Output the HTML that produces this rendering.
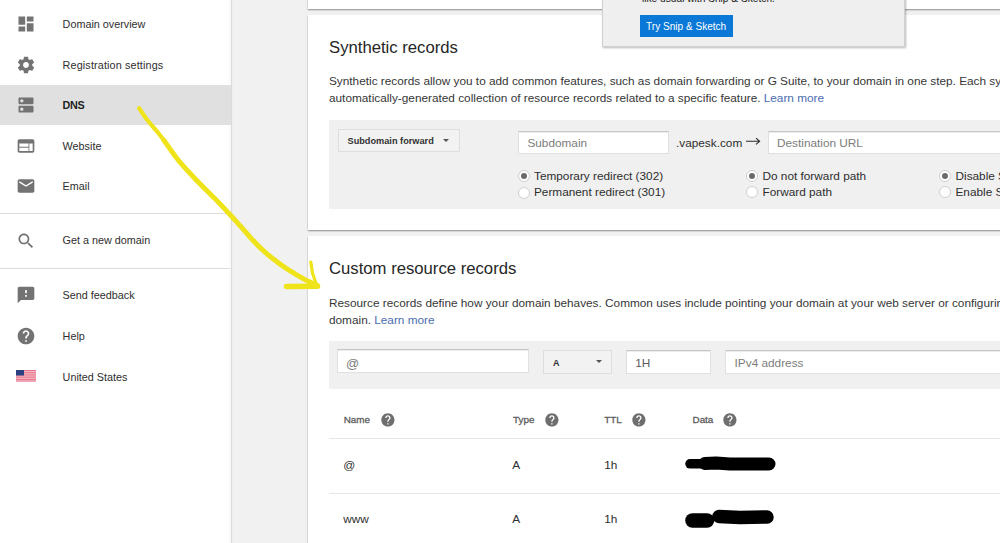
<!DOCTYPE html>
<html><head><meta charset="utf-8">
<style>
*{margin:0;padding:0;box-sizing:border-box}
html,body{width:1000px;height:543px;overflow:hidden;background:#f1f1f1;font-family:"Liberation Sans",sans-serif;color:#212121}
.a{position:absolute;white-space:nowrap;line-height:1}
#side{position:absolute;left:0;top:0;width:231px;height:543px;background:#fff;box-shadow:1px 0 1px rgba(0,0,0,.09),inset -3px 0 3px -2px rgba(0,0,0,.04)}
.hl{position:absolute;left:0;top:85px;width:231px;height:40px;background:#e0e0e0}
.nav{font-size:10.8px;color:#2e2e2e;left:62.6px}
.ico{position:absolute;left:15.5px;width:20px;height:20px;fill:#737373}
.dv{position:absolute;left:0;width:231px;height:1px;background:#dcdcdc}
.card{position:absolute;left:308px;width:700px;background:#fff;box-shadow:0 1px 1.5px rgba(0,0,0,.42)}
.h2{font-size:16.7px;color:#262626}
.p{font-size:11.8px;color:#363636}
.link{color:#4a6db0}
.gbox{position:absolute;background:#f0f0f0}
.inp{position:absolute;background:#fff;border:1px solid #e0e0e0;border-top:1px solid #c6c6c6;box-shadow:inset 0 1px 0 #ececec}
.ph{font-size:11.8px;color:#7c7c7c}
.rad{position:absolute;width:12px;height:12px;border-radius:50%;border:1px solid #cfcfcf;background:#fff}
.rad.on::after{content:"";position:absolute;left:2px;top:2px;width:6px;height:6px;border-radius:50%;background:#6a6a6a}
.rl{font-size:11.8px;color:#2e2e2e}
.th{font-size:9.9px;color:#5c5c5c;-webkit-text-stroke:0.3px #5c5c5c}
.q{position:absolute;width:13px;height:13px;border-radius:50%;background:#6f6f6f;color:#fff;font-size:10px;font-weight:bold;text-align:center;line-height:13px}
.td{font-size:11.8px;color:#2e2e2e}
.dd{position:absolute;background:#f2f2f2;border:1px solid #dedede}
.tri{position:absolute;width:0;height:0;border-left:3px solid transparent;border-right:3px solid transparent;border-top:3.5px solid #555}
</style></head><body>
<div id="side">
  <div class="hl"></div>
  <svg class="ico" style="top:14.4px" viewBox="0 0 24 24"><path d="M3 13h8V3H3v10zm0 8h8v-6H3v6zm10 0h8V11h-8v10zm0-18v6h8V3h-8z"/></svg>
  <svg class="ico" style="top:54.6px" viewBox="0 0 24 24"><path d="M19.43 12.98c.04-.32.07-.64.07-.98s-.03-.66-.07-.98l2.11-1.65c.19-.15.24-.42.12-.64l-2-3.46c-.12-.22-.39-.3-.61-.22l-2.49 1c-.52-.4-1.08-.73-1.69-.98l-.38-2.65C14.46 2.18 14.25 2 14 2h-4c-.25 0-.46.18-.49.42l-.38 2.65c-.61.25-1.17.59-1.69.98l-2.49-1c-.23-.09-.49 0-.61.22l-2 3.46c-.13.22-.07.49.12.64l2.11 1.65c-.04.32-.07.65-.07.98s.03.66.07.98l-2.11 1.65c-.19.15-.24.42-.12.64l2 3.46c.12.22.39.3.61.22l2.49-1c.52.4 1.08.73 1.69.98l.38 2.65c.03.24.24.42.49.42h4c.25 0 .46-.18.49-.42l.38-2.65c.61-.25 1.17-.59 1.69-.98l2.49 1c.23.09.49 0 .61-.22l2-3.46c.12-.22.07-.49-.12-.64l-2.11-1.65zM12 15.5c-1.93 0-3.5-1.57-3.5-3.5s1.57-3.5 3.5-3.5 3.5 1.57 3.5 3.5-1.57 3.5-3.5 3.5z"/></svg>
  <svg class="ico" style="top:95.2px" viewBox="0 0 24 24"><path d="M20 13H4c-.55 0-1 .45-1 1v6c0 .55.45 1 1 1h16c.55 0 1-.45 1-1v-6c0-.55-.45-1-1-1zM7 19c-1.1 0-2-.9-2-2s.9-2 2-2 2 .9 2 2-.9 2-2 2zM20 3H4c-.55 0-1 .45-1 1v6c0 .55.45 1 1 1h16c.55 0 1-.45 1-1V4c0-.55-.45-1-1-1zM7 9c-1.1 0-2-.9-2-2s.9-2 2-2 2 .9 2 2-.9 2-2 2z"/></svg>
  <svg class="ico" style="top:135.9px" viewBox="0 0 24 24"><path d="M20 4H4c-1.1 0-1.99.9-1.99 2L2 18c0 1.1.9 2 2 2h16c1.1 0 2-.9 2-2V6c0-1.1-.9-2-2-2zm-5 14H4v-4h11v4zm0-5H4V9h11v4zm5 5h-4V9h4v9z"/></svg>
  <svg class="ico" style="top:176px" viewBox="0 0 24 24"><path d="M20 4H4c-1.1 0-1.99.9-1.99 2L2 18c0 1.1.9 2 2 2h16c1.1 0 2-.9 2-2V6c0-1.1-.9-2-2-2zm0 4l-8 5-8-5V6l8 5 8-5v2z"/></svg>
  <svg class="ico" style="top:231px" viewBox="0 0 24 24"><path d="M15.5 14h-.79l-.28-.27C15.41 12.59 16 11.11 16 9.5 16 5.91 13.09 3 9.5 3S3 5.91 3 9.5 5.91 16 9.5 16c1.61 0 3.09-.59 4.23-1.570l.27.28v.79l5 4.99L20.49 19l-4.99-5zm-6 0C7.01 14 5 11.99 5 9.5S7.01 5 9.5 5 14 7.01 14 9.5 11.99 14 9.5 14z"/></svg>
  <svg class="ico" style="top:285.2px" viewBox="0 0 24 24"><path d="M20 2H4c-1.1 0-1.99.9-1.99 2L2 22l4-4h14c1.1 0 2-.9 2-2V4c0-1.1-.9-2-2-2zm-7 12h-2v-2h2v2zm0-4h-2V6h2v4z"/></svg>
  <svg class="ico" style="top:326.4px" viewBox="0 0 24 24"><path d="M12 2C6.48 2 2 6.48 2 12s4.48 10 10 10 10-4.48 10-10S17.52 2 12 2zm1 17h-2v-2h2v2zm2.07-7.75l-.9.92C13.45 12.9 13 13.5 13 15h-2v-.5c0-1.1.45-2.1 1.17-2.83l1.24-1.26c.37-.36.59-.86.59-1.41 0-1.1-.9-2-2-2s-2 .9-2 2H8c0-2.21 1.79-4 4-4s4 1.79 4 4c0 .88-.36 1.68-.93 2.25z"/></svg>
  <svg style="position:absolute;left:16px;top:370px" width="20" height="11.5" viewBox="0 0 20 11.5">
    <rect width="20" height="11.5" fill="#f4c2cb"/>
    <rect y="0" width="20" height="1.1" fill="#e9728a"/><rect y="2.2" width="20" height="1.1" fill="#e9728a"/><rect y="4.4" width="20" height="1.1" fill="#e9728a"/><rect y="6.6" width="20" height="1.1" fill="#e9728a"/><rect y="8.8" width="20" height="1.1" fill="#e9728a"/><rect y="10.6" width="20" height="0.9" fill="#e9728a"/>
    <rect width="8" height="5.5" fill="#2c3f80"/>
  </svg>
  <div class="a nav" style="top:19.2px">Domain overview</div>
  <div class="a nav" style="top:59.6px;letter-spacing:0.14px">Registration settings</div>
  <div class="a nav" style="top:99.9px;font-weight:bold;color:#1e1e1e;letter-spacing:-0.3px">DNS</div>
  <div class="a nav" style="top:140.5px">Website</div>
  <div class="a nav" style="top:180.8px">Email</div>
  <div class="dv" style="top:213px"></div>
  <div class="a nav" style="top:235.4px">Get a new domain</div>
  <div class="dv" style="top:268px"></div>
  <div class="a nav" style="top:290.3px">Send feedback</div>
  <div class="a nav" style="top:330.8px">Help</div>
  <div class="a nav" style="top:371.5px">United States</div>
</div>

<!-- card 1 -->
<div class="card" style="top:-20px;height:29px"></div>
<!-- card 2 -->
<div class="card" style="top:14.5px;height:215px"></div>
<div class="a h2" style="left:329px;top:39.8px">Synthetic records</div>
<div class="a p" style="left:329px;top:75.5px">Synthetic records allow you to add common features, such as domain forwarding or G Suite, to your domain in one step. Each synthetic</div>
<div class="a p" style="left:329px;top:92.6px">automatically-generated collection of resource records related to a specific feature. <span class="link">Learn more</span></div>
<div class="gbox" style="left:328.5px;top:120px;width:680px;height:89px"></div>
<div class="dd" style="left:337.5px;top:128.5px;width:122px;height:23.5px"></div>
<div class="a" style="left:347.5px;top:136.5px;font-size:9.2px;font-weight:bold;color:#333">Subdomain forward</div>
<div class="tri" style="left:443.2px;top:138.5px"></div>
<div class="inp" style="left:518px;top:130.7px;width:151px;height:23.5px"></div>
<div class="a ph" style="left:527.4px;top:137.8px">Subdomain</div>
<div class="a rl" style="left:676px;top:137.8px">.vapesk.com</div>
<svg class="a" style="left:740px;top:134px" width="24" height="14" viewBox="740 134 24 14"><path d="M746 141.3H759.5M756 138.2L759.6 141.3L756 144.4" fill="none" stroke="#2a2a2a" stroke-width="1.1"/></svg>
<div class="inp" style="left:767.5px;top:130.7px;width:300px;height:23.5px"></div>
<div class="a ph" style="left:777px;top:137.8px">Destination URL</div>
<div class="rad on" style="left:518px;top:170.3px"></div>
<div class="a rl" style="left:534px;top:170.9px">Temporary redirect (302)</div>
<div class="rad" style="left:518px;top:186.9px"></div>
<div class="a rl" style="left:534px;top:187.4px">Permanent redirect (301)</div>
<div class="rad on" style="left:745.7px;top:169.7px"></div>
<div class="a rl" style="left:762.5px;top:170.9px">Do not forward path</div>
<div class="rad" style="left:745.7px;top:186.3px"></div>
<div class="a rl" style="left:762.5px;top:187.4px">Forward path</div>
<div class="rad on" style="left:939.4px;top:169.7px"></div>
<div class="a rl" style="left:955.5px;top:170.9px">Disable SSL</div>
<div class="rad" style="left:939.4px;top:186.3px"></div>
<div class="a rl" style="left:955.5px;top:187.4px">Enable SSL</div>

<!-- card 3 -->
<div class="card" style="top:236px;height:330px"></div>
<div class="a h2" style="left:329px;top:261.3px">Custom resource records</div>
<div class="a p" style="left:329px;top:297.8px">Resource records define how your domain behaves. Common uses include pointing your domain at your web server or configuring email delivery</div>
<div class="a p" style="left:329px;top:314.6px">domain. <span class="link">Learn more</span></div>
<div class="gbox" style="left:328.5px;top:341px;width:680px;height:48px"></div>
<div class="inp" style="left:337px;top:349.3px;width:192px;height:24.2px"></div>
<div class="a ph" style="left:346px;top:357px;font-size:13px">@</div>
<div class="dd" style="left:543px;top:350.3px;width:68.5px;height:23.5px"></div>
<div class="a" style="left:553px;top:358.5px;font-size:9px;font-weight:bold;color:#333">A</div>
<div class="tri" style="left:595.6px;top:359.7px"></div>
<div class="inp" style="left:626px;top:350px;width:85px;height:24px"></div>
<div class="a ph" style="left:635.3px;top:357.7px;color:#5e5e5e">1H</div>
<div class="inp" style="left:725px;top:349.8px;width:300px;height:24px"></div>
<div class="a ph" style="left:734.6px;top:357.5px">IPv4 address</div>

<div class="a th" style="left:343.7px;top:415px">Name</div>
<svg class="a" style="left:379.7px;top:411.6px" width="15.8" height="15.8" viewBox="0 0 24 24"><path fill="#6e6e6e" d="M12 2C6.48 2 2 6.48 2 12s4.48 10 10 10 10-4.48 10-10S17.52 2 12 2zm1 17h-2v-2h2v2zm2.07-7.75l-.9.92C13.45 12.9 13 13.5 13 15h-2v-.5c0-1.1.45-2.1 1.17-2.83l1.24-1.26c.37-.36.59-.86.59-1.41 0-1.1-.9-2-2-2s-2 .9-2 2H8c0-2.21 1.79-4 4-4s4 1.79 4 4c0 .88-.36 1.68-.93 2.25z"/></svg>
<div class="a th" style="left:513px;top:415px">Type</div>
<svg class="a" style="left:543.5px;top:411.6px" width="15.8" height="15.8" viewBox="0 0 24 24"><path fill="#6e6e6e" d="M12 2C6.48 2 2 6.48 2 12s4.48 10 10 10 10-4.48 10-10S17.52 2 12 2zm1 17h-2v-2h2v2zm2.07-7.75l-.9.92C13.45 12.9 13 13.5 13 15h-2v-.5c0-1.1.45-2.1 1.17-2.83l1.24-1.26c.37-.36.59-.86.59-1.41 0-1.1-.9-2-2-2s-2 .9-2 2H8c0-2.21 1.79-4 4-4s4 1.79 4 4c0 .88-.36 1.68-.93 2.25z"/></svg>
<div class="a th" style="left:604.2px;top:415px">TTL</div>
<svg class="a" style="left:630.5px;top:411.6px" width="15.8" height="15.8" viewBox="0 0 24 24"><path fill="#6e6e6e" d="M12 2C6.48 2 2 6.48 2 12s4.48 10 10 10 10-4.48 10-10S17.52 2 12 2zm1 17h-2v-2h2v2zm2.07-7.75l-.9.92C13.45 12.9 13 13.5 13 15h-2v-.5c0-1.1.45-2.1 1.17-2.83l1.24-1.26c.37-.36.59-.86.59-1.41 0-1.1-.9-2-2-2s-2 .9-2 2H8c0-2.21 1.79-4 4-4s4 1.79 4 4c0 .88-.36 1.68-.93 2.25z"/></svg>
<div class="a th" style="left:692.5px;top:415px">Data</div>
<svg class="a" style="left:722.2px;top:411.6px" width="15.8" height="15.8" viewBox="0 0 24 24"><path fill="#6e6e6e" d="M12 2C6.48 2 2 6.48 2 12s4.48 10 10 10 10-4.48 10-10S17.52 2 12 2zm1 17h-2v-2h2v2zm2.07-7.75l-.9.92C13.45 12.9 13 13.5 13 15h-2v-.5c0-1.1.45-2.1 1.17-2.83l1.24-1.26c.37-.36.59-.86.59-1.41 0-1.1-.9-2-2-2s-2 .9-2 2H8c0-2.21 1.79-4 4-4s4 1.79 4 4c0 .88-.36 1.68-.93 2.25z"/></svg>
<div class="a" style="left:328.5px;top:438px;width:680px;height:1px;background:#e6e6e6"></div>
<div class="a td" style="left:343.3px;top:460.2px">@</div>
<div class="a td" style="left:512.2px;top:460.2px">A</div>
<div class="a td" style="left:604.3px;top:460.2px">1h</div>
<div class="a" style="left:328.5px;top:493px;width:680px;height:1px;background:#e6e6e6"></div>
<div class="a td" style="left:343.3px;top:514.3px">www</div>
<div class="a td" style="left:512.2px;top:514.3px">A</div>
<div class="a td" style="left:604.3px;top:514.3px">1h</div>
<!-- redactions -->
<svg class="a" style="left:670px;top:445px" width="120" height="95" viewBox="670 445 120 95">
  <path d="M690 463.8 L702 463.8" stroke="#000" stroke-width="9.5" stroke-linecap="round"/>
  <path d="M705 463.5 L716 463 L730 464 L769 464" stroke="#000" stroke-width="13" stroke-linecap="round" stroke-linejoin="round"/>
  <path d="M692.5 520.5 L707 520.5" stroke="#000" stroke-width="14.5" stroke-linecap="round"/>
  <path d="M719 516.5 L740 517.5 L767 517" stroke="#000" stroke-width="13.5" stroke-linecap="round" stroke-linejoin="round"/>
</svg>

<!-- popup -->
<div class="a" style="left:602px;top:-60px;width:303px;height:106.5px;background:#efefef;border:1px solid #d0d0d0;box-shadow:1px 1px 2px rgba(0,0,0,.28)"></div>
<div class="a" style="left:642px;top:-7px;font-size:11px;color:#1c1c1c;transform:scaleX(.925);transform-origin:0 0">like usual with Snip &amp; Sketch.</div>
<div class="a" style="left:640px;top:14.7px;width:93px;height:22px;background:#0a78d6"></div>
<div class="a" style="left:646.3px;top:21.4px;font-size:11.2px;color:#fff;transform:scaleX(.9);transform-origin:0 0">Try Snip &amp; Sketch</div>

<!-- yellow arrow -->
<svg class="a" style="left:0;top:0" width="1000" height="543" viewBox="0 0 1000 543">
  <path d="M139.2 108.3 C140.6 110.3 144.4 116.3 147.5 120.3 C150.6 124.3 154.9 128.9 157.6 132.2 C160.3 135.5 160.2 135.3 163.7 140.0 C167.2 144.7 172.9 153.6 178.4 160.3 C183.9 167.1 190.7 174.1 196.8 180.5 C202.9 186.9 209.7 193.2 215.2 198.9 C220.7 204.6 225.6 209.8 230.0 214.6 C234.4 219.3 237.9 223.3 241.5 227.4 C245.1 231.5 248.4 235.4 251.8 239.1 C255.2 242.8 258.7 246.3 262.1 249.5 C265.5 252.7 268.7 255.4 272.4 258.3 C276.1 261.2 280.3 264.4 284.2 267.1 C288.1 269.8 292.3 272.3 296.0 274.5 C299.7 276.7 302.8 278.6 306.3 280.4 C309.9 282.2 315.5 284.6 317.3 285.5" fill="none" stroke="#efe31a" stroke-width="4.2" stroke-linecap="round" stroke-linejoin="round"/>
  <path d="M163.7 140.0 C167.2 144.7 172.9 153.6 178.4 160.3 C183.9 167.1 190.7 174.1 196.8 180.5 C202.9 186.9 209.7 193.2 215.2 198.9 C220.7 204.6 225.6 209.8 230.0 214.6 C234.4 219.3 237.9 223.3 241.5 227.4 C245.1 231.5 248.4 235.4 251.8 239.1 C255.2 242.8 258.7 246.3 262.1 249.5 C265.5 252.7 268.7 255.4 272.4 258.3 C276.1 261.2 280.3 264.4 284.2 267.1 C288.1 269.8 292.3 272.3 296.0 274.5 C299.7 276.7 302.8 278.6 306.3 280.4 C309.9 282.2 315.5 284.6 317.3 285.5" fill="none" stroke="#efe31a" stroke-width="4.9" stroke-linecap="round" stroke-linejoin="round"/>
  <path d="M286.5 286.5 L317.5 286.2" fill="none" stroke="#efe31a" stroke-width="5.5" stroke-linecap="round"/>
  <path d="M310.8 262 L312.5 273 L316.5 285" fill="none" stroke="#efe31a" stroke-width="3.2" stroke-linecap="round" stroke-linejoin="round"/>
</svg>
</body></html>
